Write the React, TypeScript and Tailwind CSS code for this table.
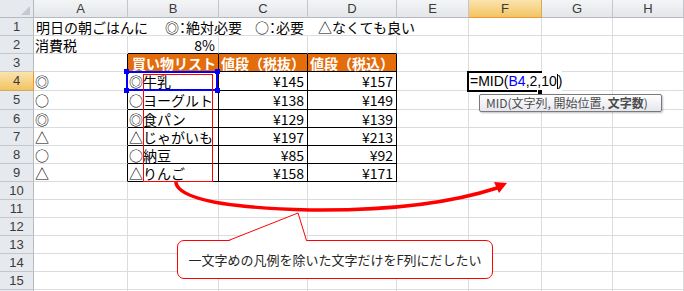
import { Fragment } from "react";

const COLS = ["A", "B", "C", "D", "E", "F", "G", "H"];
const ROWS = Array.from({ length: 16 }, (_, i) => i + 1);

type CellDef = { t: string; right?: boolean };

const data: Record<string, CellDef> = {
  A2: { t: "消費税" },
  B2: { t: "8%", right: true },
  B3: { t: "買い物リスト" },
  C3: { t: "値段（税抜）" },
  D3: { t: "値段（税込）" },
  A4: { t: "◎" },
  A5: { t: "○" },
  A6: { t: "◎" },
  A7: { t: "△" },
  A8: { t: "○" },
  A9: { t: "△" },
  B4: { t: "◎牛乳" },
  B5: { t: "○ヨーグルト" },
  B6: { t: "◎食パン" },
  B7: { t: "△じゃがいも" },
  B8: { t: "○納豆" },
  B9: { t: "△りんご" },
  C4: { t: "¥145", right: true },
  C5: { t: "¥138", right: true },
  C6: { t: "¥129", right: true },
  C7: { t: "¥197", right: true },
  C8: { t: "¥85", right: true },
  C9: { t: "¥158", right: true },
  D4: { t: "¥157", right: true },
  D5: { t: "¥149", right: true },
  D6: { t: "¥139", right: true },
  D7: { t: "¥213", right: true },
  D8: { t: "¥92", right: true },
  D9: { t: "¥171", right: true },
};

const Corner = () => (
  <div className="relative bg-[#e6e9ed] border-r border-b border-[#b5bac1]">
    <svg className="absolute left-0 top-0" width="34" height="18">
      <polygon points="30,6 30,15 21,15" fill="#c4c9d0" />
    </svg>
  </div>
);

const ColHead = ({ label, active }: { label: string; active: boolean }) => (
  <div
    className={
      active
        ? "flex items-center justify-center bg-gradient-to-b from-[#fbe3ac] to-[#f2c462] border-r border-r-[#d9a85a] border-b border-b-[#f29536] text-[13px] text-[#3b3b3b] font-['Liberation_Sans',sans-serif]"
        : "flex items-center justify-center bg-gradient-to-b from-[#f4f5f7] to-[#e3e6ea] border-r border-r-[#c3c7cd] border-b border-b-[#b5bac1] text-[13px] text-[#3b3b3b] font-['Liberation_Sans',sans-serif]"
    }
  >
    {label}
  </div>
);

const RowHead = ({ n, active }: { n: number; active: boolean }) => (
  <div
    className={
      active
        ? "flex items-center justify-center bg-gradient-to-b from-[#fbe3ac] to-[#f2c462] border-r border-r-[#f29536] border-b border-b-[#d9a85a] text-[13px] text-[#3b3b3b] font-['Liberation_Sans',sans-serif]"
        : "flex items-center justify-center bg-[#e6e9ed] border-r border-r-[#b5bac1] border-b border-b-[#c3c7cd] text-[13px] text-[#3b3b3b] font-['Liberation_Sans',sans-serif]"
    }
  >
    {n}
  </div>
);

// full-width colon, squeezed like a proportional Japanese font
const Colon = () => <span className="[font-feature-settings:'palt']">：</span>;

const Cell = ({ col, row }: { col: string; row: number }) => {
  const d = data[col + row];
  const tableCol = col === "B" || col === "C" || col === "D";
  const inTable = tableCol && row >= 3 && row <= 9;
  const head = inTable && row === 3;

  const right = inTable || (col === "A" && row >= 3 && row <= 9)
    ? "border-r-black"
    : row === 1 && col !== "E" && col !== "F" && col !== "G" && col !== "H"
      ? "border-r-transparent"
      : "border-r-[#dadcdd]";
  const bottom = inTable || (tableCol && row === 2) ? "border-b-black" : "border-b-[#dadcdd]";

  if (col === "A" && row === 1) {
    return (
      <div className={`flex items-center border-r border-b ${right} ${bottom} pl-[2px] whitespace-nowrap leading-[18px]`}>
        <span className="inline-block w-[129px] shrink-0">明日の朝ごはんに</span>
        <span className="inline-block w-[90px] shrink-0">
          ◎<Colon />絶対必要
        </span>
        <span className="inline-block w-[63px] shrink-0">
          ○<Colon />必要
        </span>
        <span className="shrink-0">△なくても良い</span>
      </div>
    );
  }

  if (head && d) {
    return (
      <div className={`flex items-center border-r border-b ${right} ${bottom} bg-[#e46c0a] text-white font-bold whitespace-nowrap leading-[18px] ${col === "B" ? "pl-[4px]" : "pl-[2px]"}`}>
        {d.t}
      </div>
    );
  }

  return (
    <div
      className={`flex items-center border-r border-b ${right} ${bottom} whitespace-nowrap leading-[18px] ${
        d?.right ? "justify-end pr-[3px]" : "pl-[1px]"
      }`}
    >
      {d?.t}
    </div>
  );
};

export default function App() {
  return (
    <div className="relative w-[684px] h-[291px] overflow-hidden bg-white text-[14px] text-black font-['Noto_Sans_CJK_JP',sans-serif]">
      <div className="grid grid-cols-[34px_94px_91px_89px_89px_72px_73px_71px_1fr] grid-rows-[18px_18px_18px_18px_19px_19px_repeat(11,18px)]">
        <Corner />
        {COLS.map((c) => (
          <ColHead key={c} label={c} active={c === "F"} />
        ))}
        {ROWS.map((r) => (
          <Fragment key={r}>
            <RowHead n={r} active={r === 4} />
            {COLS.map((c) => (
              <Cell key={c} col={c} row={r} />
            ))}
          </Fragment>
        ))}
      </div>

      {/* range finder on B4 */}
      <div className="absolute left-[126px] top-[71px] w-[92px] h-[20px] border-2 border-[#0000ff]" />
      <div className="absolute left-[124px] top-[69px] w-[5px] h-[5px] bg-[#0000ff]" />
      <div className="absolute left-[215px] top-[69px] w-[5px] h-[5px] bg-[#0000ff]" />
      <div className="absolute left-[124px] top-[88px] w-[5px] h-[5px] bg-[#0000ff]" />
      <div className="absolute left-[215px] top-[88px] w-[5px] h-[5px] bg-[#0000ff]" />

      {/* red marker over the item names */}
      <div className="absolute left-[143px] top-[74px] w-[70px] h-[108px] border border-[#ff0000]" />

      {/* cell being edited */}
      <div className="absolute left-[467px] top-[71px] w-[95px] h-[21px] bg-white" />
      <div className="absolute left-[467px] top-[71px] w-[75px] h-[21px] border-2 border-r-0 border-black" />
      <div className="absolute left-[470px] top-[72px] h-[19px] flex items-center text-[14px] font-['Liberation_Sans',sans-serif] whitespace-nowrap">
        <span>=MID(</span>
        <span className="text-[#0000ff]">B4</span>
        <span>,2,10</span>
        <span className="inline-block w-px h-[15px] bg-black" />
        <span>)</span>
      </div>
      <div className="absolute left-[537px] top-[89px] w-[6px] h-[6px] bg-black border border-white" />

      {/* function tooltip */}
      <div className="absolute left-[479px] top-[94px] w-[183px] h-[18px] flex items-center pl-[6px] border border-[#7a7a7a] rounded-[2px] bg-gradient-to-b from-white to-[#e6e7ee] shadow-[1px_1px_2px_rgba(0,0,0,0.25)] text-[12px] text-[#4c4c4c] whitespace-pre leading-none">
        <span>
          {"MID(文字列, 開始位置, "}
          <span className="font-bold">文字数</span>)
        </span>
      </div>

      {/* callout */}
      <div className="absolute left-[177px] top-[240px] w-[316px] h-[39px] flex items-center justify-center border border-[#ff0000] rounded-[7px] bg-white text-[13px] text-[#262626] whitespace-nowrap">
        一文字めの凡例を除いた文字だけをF列にだしたい
      </div>

      <svg className="absolute left-0 top-0 pointer-events-none" width="684" height="291">
        <path
          d="M176,183 C180,200 230,208 310,210 C400,211 460,200 497,188"
          fill="none"
          stroke="#ff0000"
          strokeWidth="3.5"
          strokeLinecap="round"
        />
        <polygon points="507,183 494,182 499,193" fill="#ff0000" />
        <polygon points="228.5,241 298,213 306.5,241" fill="#ffffff" />
        <polyline points="228.5,240.5 298,213 306.5,240.5" fill="none" stroke="#ff0000" strokeWidth="1" />
      </svg>
    </div>
  );
}
